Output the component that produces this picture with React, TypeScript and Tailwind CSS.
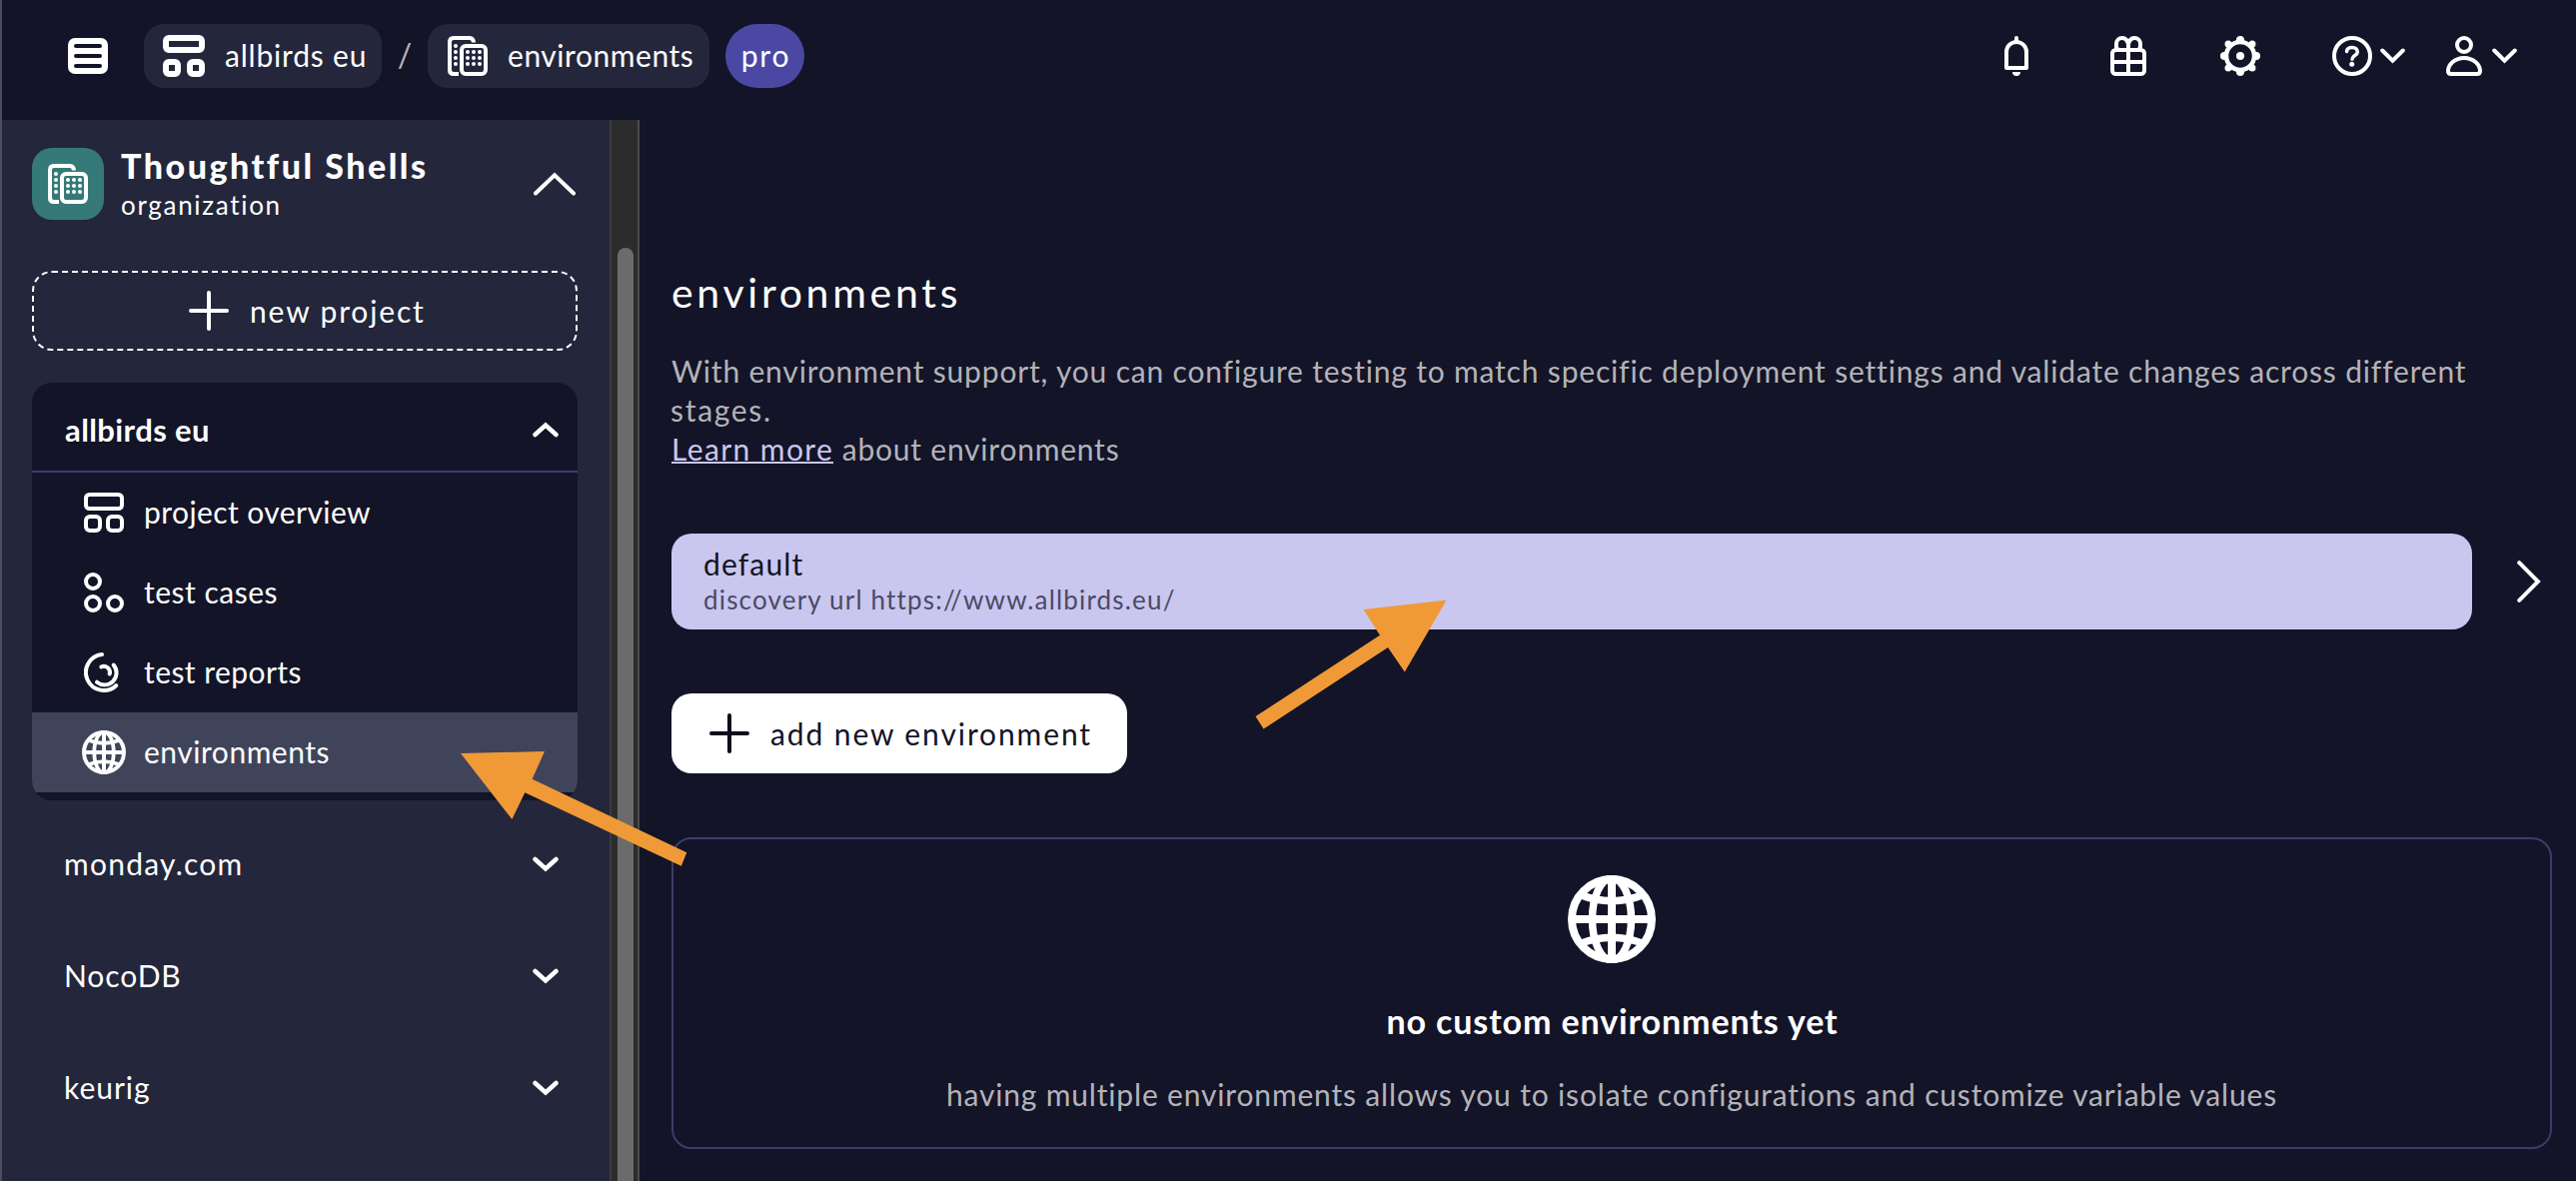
import type { ReactNode } from "react";

function MenuIcon() {
  return (
    <svg className="h-9 w-10 shrink-0" viewBox="0 0 40 36">
      <rect width="40" height="36" rx="7" fill="#fff" />
      <path d="M8 8h24M8 18h24M8 28h24" stroke="#131427" strokeWidth="4" strokeLinecap="round" />
    </svg>
  );
}

function BoardIconBold() {
  return (
    <svg className="size-[42px] shrink-0" viewBox="0 0 42 42" fill="none" stroke="#fff" strokeWidth="6">
      <rect x="3" y="3" width="36" height="12" rx="3" />
      <rect x="3" y="27" width="12" height="12" rx="3" />
      <rect x="27" y="27" width="12" height="12" rx="3" />
    </svg>
  );
}

function BoardIcon() {
  return (
    <svg className="size-10" viewBox="0 0 40 40" fill="none" stroke="#fff" strokeWidth="4">
      <rect x="2" y="2" width="36" height="14" rx="3.5" />
      <rect x="2" y="24" width="14" height="14" rx="4" />
      <rect x="24" y="24" width="14" height="14" rx="4" />
    </svg>
  );
}

function BuildingsIcon() {
  return (
    <svg className="size-10 shrink-0" viewBox="0 0 40 40" fill="none" stroke="#fff" strokeWidth="4">
      <path d="M26 6.5C26 4 24.500 2 22 2H6C3.500 2 2 3.500 2 6v28c0 2.500 1.500 4 4 4h5" />
      <rect x="14" y="10" width="24" height="28" rx="4" />
      <g fill="#fff" stroke="none">
        {[10, 16, 22, 28].map((y) => (
          <circle key={y} cx="8" cy={y} r="2" />
        ))}
        {[16, 22, 28].map((y) => [20, 26, 32].map((x) => <circle key={`${x}-${y}`} cx={x} cy={y} r="2" />))}
      </g>
    </svg>
  );
}

function CirclesIcon() {
  return (
    <svg className="size-10" viewBox="0 0 40 40" fill="none" stroke="#fff" strokeWidth="4">
      <circle cx="9" cy="9" r="7" />
      <circle cx="9" cy="31" r="7" />
      <circle cx="31" cy="31" r="7" />
    </svg>
  );
}

function ReportIcon() {
  return (
    <svg className="size-10" viewBox="0 0 40 40" fill="none" stroke="#fff" strokeWidth="4" strokeLinecap="round">
      <path d="M18 2.100A18 18 0 1 0 32.200 33.200" />
      <path d="M29.700 12.600A12 12 0 0 1 13 29.700" />
      <path d="M17.300 14.500A6 6 0 0 1 25.700 21.500" />
    </svg>
  );
}

function GlobeIcon({ className }: { className: string }) {
  return (
    <svg className={className} viewBox="0 0 88 88" fill="none" stroke="#fff" strokeWidth="8">
      <circle cx="44" cy="44" r="40" />
      <ellipse cx="44" cy="44" rx="19.500" ry="41" strokeWidth="7.500" />
      <path d="M44 4v80M4 44h80" />
      <path d="M11 19q33 13.500 66 0M11 69q33 -13.500 66 0" strokeWidth="7.500" />
    </svg>
  );
}

function BellIcon() {
  return (
    <svg className="size-10" viewBox="0 0 40 40" fill="none" stroke="#fff" strokeWidth="4">
      <path d="M20 6V2" strokeLinecap="round" />
      <path d="M10 32V16a10 10 0 0 1 20 0v16z" strokeLinejoin="round" />
      <path d="M16 36h8a4 4 0 0 1-8 0z" fill="#fff" stroke="none" />
    </svg>
  );
}

function GiftIcon() {
  return (
    <svg className="size-10" viewBox="0 0 40 40" fill="none" stroke="#fff" strokeWidth="4">
      <rect x="4" y="14" width="32" height="24" rx="3.500" />
      <path d="M20 14v24M4 26h32" />
      <path d="M20 15V10c0-4.500-2.500-8-6-8s-6 2.500-6 6v3l1.500 3M20 10c0-4.500 2.500-8 6-8s6 2.500 6 6v3l-1.500 3" />
    </svg>
  );
}

function GearIcon() {
  return (
    <svg className="size-10" viewBox="0 0 40 40" fill="none" stroke="#fff">
      <circle cx="20" cy="20" r="14" strokeWidth="4.500" />
      <circle cx="20" cy="20" r="4" fill="#fff" stroke="none" />
      <g strokeWidth="8" strokeLinecap="round">
        <path d="M20 4v0M20 36v0M4 20v0M36 20v0" />
        <path d="M8 8v0M32 8v0M8 32v0M32 32v0" strokeWidth="7" />
      </g>
    </svg>
  );
}

function HelpIcon() {
  return (
    <svg className="size-10" viewBox="0 0 40 40" fill="none" stroke="#fff" strokeWidth="4">
      <circle cx="20" cy="20" r="18" />
      <path d="M14.500 15.500c.300-2.500 2.500-4 5.500-4s5.300 1.700 5.300 4.400c0 3.600-5.300 3.700-5.300 7.300" strokeWidth="3.500" strokeLinecap="round" />
      <circle cx="19.700" cy="28.300" r="2.500" fill="#fff" stroke="none" />
    </svg>
  );
}

function PersonIcon() {
  return (
    <svg className="size-10" viewBox="0 0 40 40" fill="none" stroke="#fff" strokeWidth="4">
      <circle cx="20" cy="9" r="7" />
      <path d="M7 38c-2 0-3-1-3-3C4 28.500 11 22 20 22s16 6.500 16 13c0 2-1 3-3 3z" />
    </svg>
  );
}

function PlusIcon({ color }: { color: string }) {
  return (
    <svg className="size-10 shrink-0" viewBox="0 0 40 40" stroke={color} strokeWidth="4" strokeLinecap="round">
      <path d="M20 2v36M2 20h36" />
    </svg>
  );
}

function Chevron({ up = false }: { up?: boolean }) {
  return (
    <svg className={up ? "h-4 w-[26px] shrink-0 rotate-180" : "h-4 w-[26px] shrink-0"} viewBox="0 0 26 16" fill="none" stroke="#fff" strokeWidth="4.500" strokeLinecap="round">
      <path d="M2.500 3 13 12.500 23.500 3" />
    </svg>
  );
}

function HeaderChevron() {
  return (
    <svg className="h-4 w-[25px]" viewBox="0 0 25 16" fill="none" stroke="#fff" strokeWidth="4" strokeLinecap="round">
      <path d="M2.200 2.500 12.500 12.700 22.800 2.500" />
    </svg>
  );
}

function Header() {
  return (
    <header className="flex h-[120px] shrink-0 items-start justify-between bg-[#131427] pt-6 pr-[59px] pl-[66px]">
      <div className="flex h-16 items-center">
        <MenuIcon />
        <div className="ml-9 flex h-16 w-[238px] items-center rounded-[20px] bg-[#24263b] pl-[19px]">
          <BoardIconBold />
          <span className="ml-5 pb-[3px] tracking-[0.8px]">allbirds eu</span>
        </div>
        <span className="w-[46px] pb-[3px] text-center text-[32px] text-[#b4b4bb]">/</span>
        <div className="flex h-16 w-[282px] items-center rounded-[20px] bg-[#24263b] pl-5">
          <BuildingsIcon />
          <span className="ml-5 pb-[3px] tracking-[0.54px]">environments</span>
        </div>
        <div className="ml-4 flex h-16 w-[79px] items-center justify-center rounded-full bg-[#4a48a3] pb-[3px] pl-0.5 tracking-[1.8px]">pro</div>
      </div>
      <div className="flex h-16 items-center">
        <div className="flex items-center gap-[72px]">
          <BellIcon />
          <GiftIcon />
          <GearIcon />
          <div className="flex items-center gap-2">
            <HelpIcon />
            <HeaderChevron />
          </div>
        </div>
        <div className="ml-[39px] flex items-center gap-2">
          <PersonIcon />
          <HeaderChevron />
        </div>
      </div>
    </header>
  );
}

function NavItem({ icon, label, tracking, active = false }: { icon: ReactNode; label: string; tracking: string; active?: boolean }) {
  return (
    <a className={active ? "flex h-20 items-center bg-[#40445a] pl-[49px]" : "flex h-20 items-center pl-[49px]"}>
      <span className="flex w-[46px] justify-center">{icon}</span>
      <span className={`ml-[17px] pb-[3px] ${tracking}`}>{label}</span>
    </a>
  );
}

function ProjectRow({ name, tracking }: { name: string; tracking: string }) {
  return (
    <div className="flex h-28 items-center justify-between pr-[19px] pl-8">
      <span className={`pb-[3px] ${tracking}`}>{name}</span>
      <Chevron />
    </div>
  );
}

function Sidebar() {
  return (
    <aside className="w-[608px] shrink-0 overflow-hidden bg-[#24263b] pt-7 pr-8 pl-[30px]">
      <div className="flex h-[72px] items-center">
        <div className="flex size-[72px] items-center justify-center rounded-[20px] bg-[#357a78]">
          <BuildingsIcon />
        </div>
        <div className="ml-[17px] flex-1 pt-0.5">
          <div className="text-[34px] leading-10 font-black tracking-[2.5px]">Thoughtful Shells</div>
          <div className="text-[26px] leading-[38px] tracking-[1.7px]">organization</div>
        </div>
        <svg className="mr-0.5 h-6 w-[42px]" viewBox="0 0 42 24" fill="none" stroke="#fff" strokeWidth="4" strokeLinecap="round">
          <path d="M2 21.500 21 3.300 40 21.500" />
        </svg>
      </div>
      <button className="mt-[51px] flex h-20 w-full items-center rounded-[20px] border-2 border-dashed border-white pl-[155px]">
        <PlusIcon color="#fff" />
        <span className="ml-[21px] tracking-[1.85px]">new project</span>
      </button>
      <div className="mt-8 overflow-hidden rounded-[20px] bg-[#131427] pb-2">
        <div className="flex h-[90px] items-center justify-between border-b-2 border-[#3a3d6b] pt-1.5 pr-[19px] pl-[33px]">
          <span className="text-[31px] font-bold tracking-[0.4px]">allbirds eu</span>
          <Chevron up />
        </div>
        <NavItem icon={<BoardIcon />} label="project overview" tracking="tracking-[0.42px]" />
        <NavItem icon={<CirclesIcon />} label="test cases" tracking="tracking-[0.5px]" />
        <NavItem icon={<ReportIcon />} label="test reports" tracking="tracking-[0.45px]" />
        <NavItem icon={<GlobeIcon className="size-11" />} label="environments" tracking="tracking-[0.52px]" active />
      </div>
      <div className="mt-2">
        <ProjectRow name="monday.com" tracking="tracking-[1.25px]" />
        <ProjectRow name="NocoDB" tracking="tracking-[0.9px]" />
        <ProjectRow name="keurig" tracking="tracking-[1px]" />
      </div>
    </aside>
  );
}

function Scrollbar() {
  return (
    <div className="flex w-[30px] shrink-0 border-r-2 border-l-2 border-r-[#4c4b4a] border-l-[#3c3c3e] bg-[#2c2c2c] pt-32 pl-1.5">
      <div className="w-4 rounded-t-full bg-[#6b6b6b]" />
    </div>
  );
}

function Main() {
  return (
    <main className="min-w-0 flex-1 pt-[149px] pr-6 pl-8">
      <h1 className="text-[41px] leading-[48px] tracking-[3.7px]">environments</h1>
      <div className="mt-[35px] leading-[39px] text-[#b3b3b9]">
        <p className="w-[1820px] tracking-[0.82px]">
          With environment support, you can configure testing to match specific deployment settings and validate changes across different
          <br />
          <span className="ml-[-1px] tracking-[1.7px]">stages.</span>
        </p>
        <p className="tracking-[0.78px]">
          <a className="inline-block h-[34px] border-b-2 border-[#c9c7f0] align-top tracking-[1.4px] text-[#c9c7f0]">Learn more</a> about environments
        </p>
      </div>
      <div className="mt-[65px] flex items-center">
        <div className="h-24 w-[1802px] rounded-[20px] bg-[#c9c7f0] pt-3 pl-8">
          <div className="leading-9 tracking-[1.15px] text-[#131427]">default</div>
          <div className="text-[26px] leading-9 tracking-[1.18px] text-[#4b4a66]">discovery url https://www.allbirds.eu/</div>
        </div>
        <svg className="ml-[45px] h-[42px] w-6" viewBox="0 0 24 42" fill="none" stroke="#fff" strokeWidth="4" strokeLinecap="round">
          <path d="M2.200 2.200 21 21 2.200 39.800" />
        </svg>
      </div>
      <button className="mt-16 flex h-20 w-[456px] items-center rounded-[20px] bg-white pl-[38px]">
        <PlusIcon color="#0d0e1c" />
        <span className="ml-[21px] tracking-[1.89px] text-[#131427]">add new environment</span>
      </button>
      <section className="mt-16 flex h-[312px] flex-col items-center rounded-[20px] border-2 border-[#3a3d6b] pt-9">
        <GlobeIcon className="size-[88px]" />
        <h2 className="mt-[38px] pl-px text-[34px] leading-10 font-bold tracking-[0.88px]">no custom environments yet</h2>
        <p className="mt-[33px] leading-10 tracking-[0.83px] text-[#b3b3b9]">having multiple environments allows you to isolate configurations and customize variable values</p>
      </section>
    </main>
  );
}

function PointerArrows() {
  return (
    <svg className="pointer-events-none" width="2578" height="1182" viewBox="0 0 2578 1182" fill="#f09a37">
      <path d="M461 754 545 752 532.600 779.700 687.300 853.300 681.800 866.700 525.300 793.300 512.400 820z" />
      <path d="M1447.700 600.400 1364.500 610 1381 635.700 1256.500 717 1264.600 729.600 1389 647.900 1405.800 672.500z" />
    </svg>
  );
}

export default function App() {
  return (
    <div className="relative flex h-[1182px] w-[2578px] flex-col overflow-hidden border-l-2 border-[#4a4b5c] bg-[#131427] font-['Lato',sans-serif] text-[30px] leading-9 whitespace-nowrap text-white">
      <Header />
      <div className="flex min-h-0 flex-1">
        <Sidebar />
        <Scrollbar />
        <Main />
      </div>
      <div className="absolute inset-y-0 -left-0.5">
        <PointerArrows />
      </div>
    </div>
  );
}
